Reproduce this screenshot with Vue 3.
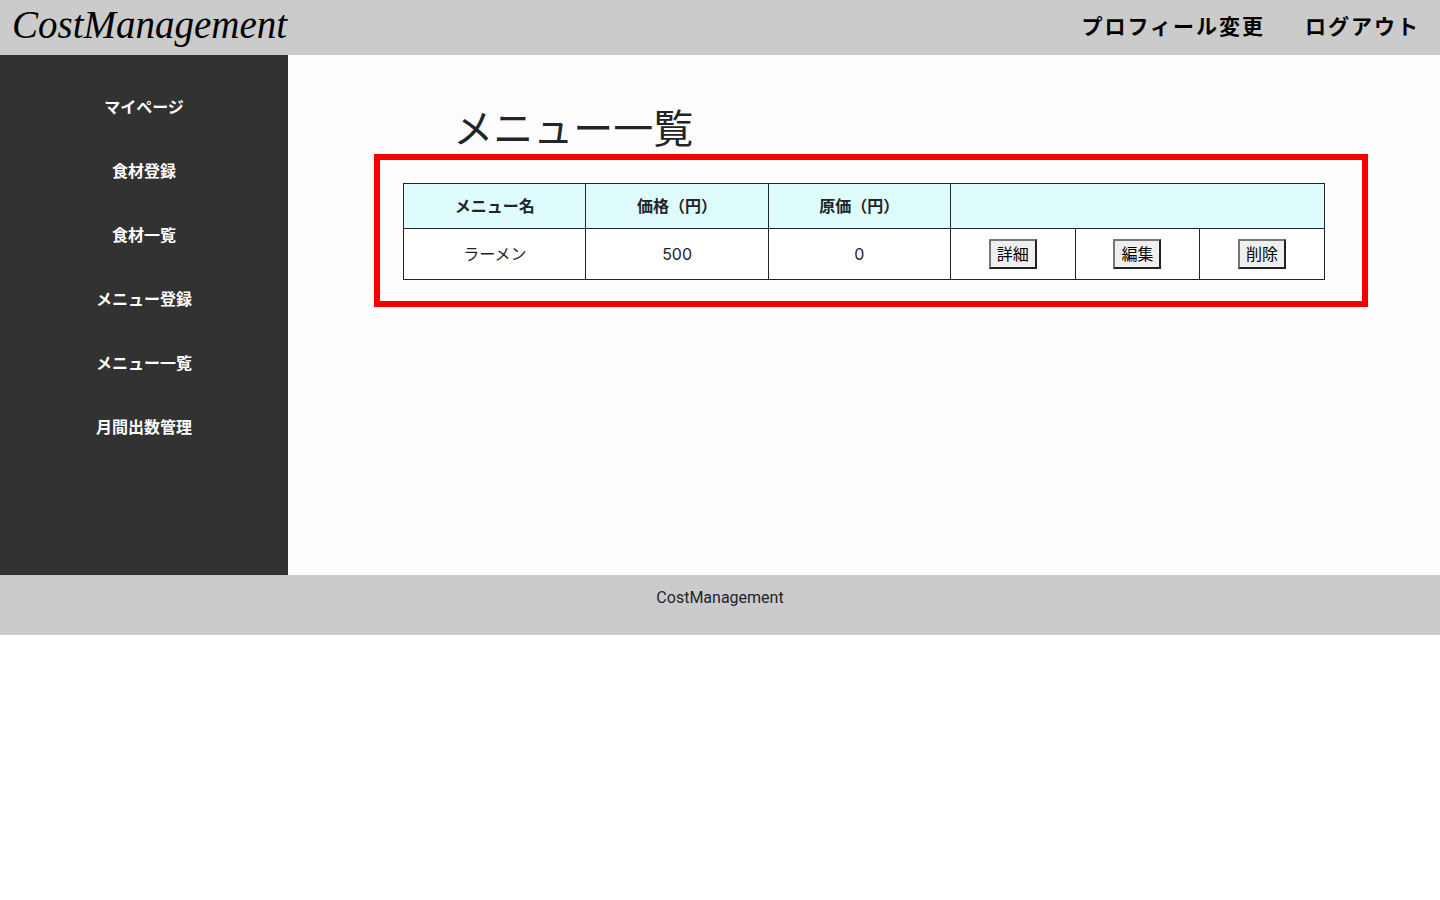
<script setup>
const accountLinks = ['プロフィール変更', 'ログアウト']
const sideLinks = ['マイページ', '食材登録', '食材一覧', 'メニュー登録', 'メニュー一覧', '月間出数管理']
const menus = [{ name: 'ラーメン', price: 500, cost: 0 }]
const actions = ['詳細', '編集', '削除']
</script>

<template>
  <div class="page">
    <header class="header">
      <a class="logo" href="#">CostManagement</a>
      <nav class="account">
        <a v-for="label in accountLinks" :key="label" href="#">{{ label }}</a>
      </nav>
    </header>
    <div class="body">
      <nav class="sidebar">
        <a v-for="label in sideLinks" :key="label" href="#">{{ label }}</a>
      </nav>
      <main class="main">
        <h1>メニュー一覧</h1>
        <div class="list">
          <table>
            <colgroup>
              <col v-for="n in 3" :key="n" class="data-col" />
              <col v-for="n in 3" :key="n + 3" />
            </colgroup>
            <thead>
              <tr>
                <th>メニュー名</th>
                <th>価格（円）</th>
                <th>原価（円）</th>
                <th colspan="3"></th>
              </tr>
            </thead>
            <tbody>
              <tr v-for="menu in menus" :key="menu.name">
                <td>{{ menu.name }}</td>
                <td>{{ menu.price }}</td>
                <td>{{ menu.cost }}</td>
                <td v-for="action in actions" :key="action">
                  <button type="button">{{ action }}</button>
                </td>
              </tr>
            </tbody>
          </table>
        </div>
      </main>
    </div>
    <footer class="footer">CostManagement</footer>
  </div>
</template>

<style>
body {
  margin: 0;
  background: #fff;
}
</style>

<style scoped>
.page {
  font-family: Inter, "Noto Sans CJK JP", sans-serif;
  font-size: 16px;
  line-height: 24px;
  color: #212529;
}
a {
  text-decoration: none;
}
.header {
  box-sizing: border-box;
  display: flex;
  justify-content: space-between;
  align-items: center;
  height: 55px;
  padding: 0 20px 2px 12px;
  background: #cbcbcb;
}
.logo {
  padding-bottom: 4px;
  font-family: "Apple Chancery", "Liberation Serif", serif;
  font-style: italic;
  font-size: 39px;
  line-height: 48px;
  color: #000;
}
.account {
  display: flex;
  gap: 40px;
}
.account a {
  font-size: 21px;
  font-weight: 700;
  letter-spacing: 2px;
  color: #000;
}
.body {
  display: flex;
  min-height: 520px;
}
.sidebar {
  flex: 0 0 20%;
  box-sizing: border-box;
  display: flex;
  flex-direction: column;
  align-items: center;
  gap: 40px;
  padding-top: 40px;
  background: #323232;
}
.sidebar a {
  font-weight: 700;
  color: #fff;
}
.main {
  flex: 1;
  background: #fdfdfd;
}
h1 {
  margin: 50px 0 30px;
  padding-left: calc(10% + 50px);
  font-size: 40px;
  line-height: 48px;
  font-weight: 400;
}
.list {
  position: relative;
  width: 80%;
  margin: 0 auto;
}
/* Highlight frame drawn around the table */
.list::after {
  content: "";
  position: absolute;
  inset: -29px -43px -27px -29px;
  border: 6px solid #f80000;
  pointer-events: none;
}
table {
  width: 100%;
  table-layout: fixed;
  border-collapse: collapse;
  text-align: center;
}
.data-col {
  width: 19.8%;
}
th,
td {
  padding: 10px;
  border: 1px solid #212529;
}
th {
  background: #defcfb;
}
td {
  background: #fff;
}
button {
  display: block;
  margin: 0 auto;
  padding: 1px 6px;
  border: 2px solid;
  border-color: #767676 #212121 #212121 #767676;
  border-radius: 0;
  background: #efefef;
  font: inherit;
  color: #000;
}
.footer {
  box-sizing: border-box;
  min-height: 60px;
  padding: 11px;
  background: #cbcbcb;
  font-family: Roboto, sans-serif;
  text-align: center;
}
</style>
